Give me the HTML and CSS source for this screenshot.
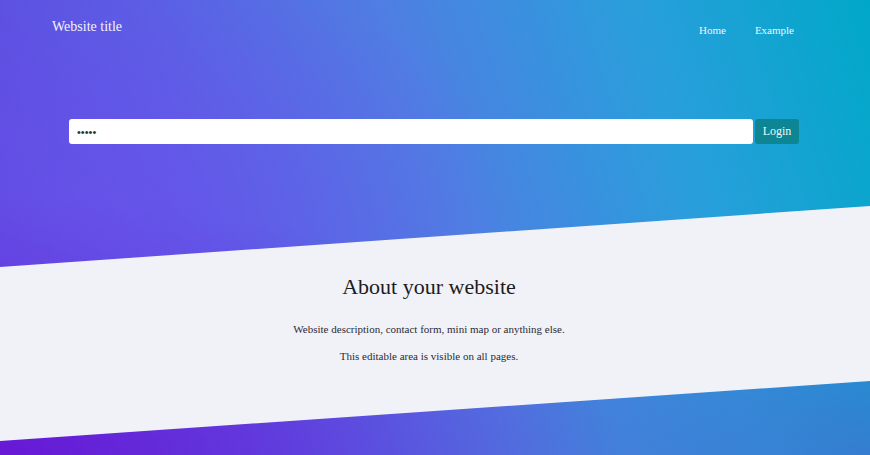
FILE: index.html
```html
<!DOCTYPE html>
<html>
<head>
<meta charset="utf-8">
<link rel="stylesheet" href="styles.css">
</head>
<body>
<div class="page">
  <header class="top">
    <div class="brand">Website title</div>
    <nav class="nav">
      <a href="#">Home</a>
      <a href="#">Example</a>
    </nav>
  </header>
  <form class="login">
    <input class="pass" type="password" value="12345">
    <button class="btn" type="button">Login</button>
  </form>
  <section class="about">
    <h2 class="about-title">About your website</h2>
    <p class="about-text">Website description, contact form, mini map or anything else.</p>
    <p class="about-text">This editable area is visible on all pages.</p>
  </section>
</div>
</body>
</html>
```
FILE: styles.css
```css
html, body {
  margin: 0;
  padding: 0;
}
body {
  width: 870px;
  height: 455px;
  overflow: hidden;
  font-family: "Liberation Serif", "Times New Roman", serif;
  background:
    radial-gradient(ellipse 380px 240px at 130px 200px, rgba(112, 80, 240, 0.5), rgba(112, 80, 240, 0) 100%),
    radial-gradient(ellipse 620px 260px at 0 455px, rgba(108, 0, 210, 0.65), rgba(108, 0, 210, 0) 100%),
    radial-gradient(ellipse 460px 220px at 870px 455px, rgba(70, 100, 205, 0.6), rgba(70, 100, 205, 0) 100%),
    linear-gradient(72deg, #5e44dc 0%, #5a5ee4 28%, #4f7ee2 52%, #2a9edc 76%, #00a8c8 100%);
}
.page {
  display: flex;
  flex-direction: column;
  height: 455px;
}
.top {
  display: flex;
  justify-content: space-between;
  align-items: flex-start;
  padding: 19px 76px 0 52px;
}
.brand {
  color: #f2f2fb;
  font-size: 14px;
  line-height: 16px;
}
.nav {
  display: flex;
  gap: 29px;
  padding-top: 4px;
}
.nav a {
  color: #eef4fb;
  text-decoration: none;
  font-size: 11px;
  line-height: 14px;
}
.login {
  display: flex;
  margin: 82px 71px 0 69px;
  gap: 2px;
}
.pass {
  flex: 1;
  height: 25px;
  box-sizing: border-box;
  border: none;
  border-radius: 3px;
  background: #fff;
  padding: 0 8px;
  font-size: 11px;
  color: #333;
  outline: none;
}
.btn {
  width: 44px;
  height: 25px;
  border: none;
  border-radius: 3px;
  background: #0d8593;
  color: #eef6f8;
  font-family: "Liberation Serif", serif;
  font-size: 12px;
  padding: 0;
}
.about {
  margin-top: 62px;
  height: 235px;
  box-sizing: border-box;
  background: #f1f2f8;
  clip-path: polygon(0 61px, 100% 0, 100% 175px, 0 100%);
  text-align: center;
  padding: 68px 12px 0 0;
}
.about-title {
  margin: 0;
  font-weight: normal;
  font-size: 22px;
  line-height: 26px;
  color: #1c1c22;
}
.about-text {
  margin: 14px 0 0;
  font-size: 11px;
  line-height: 13px;
  color: #2c2a33;
}
.about-title + .about-text {
  margin-top: 23px;
}
```
